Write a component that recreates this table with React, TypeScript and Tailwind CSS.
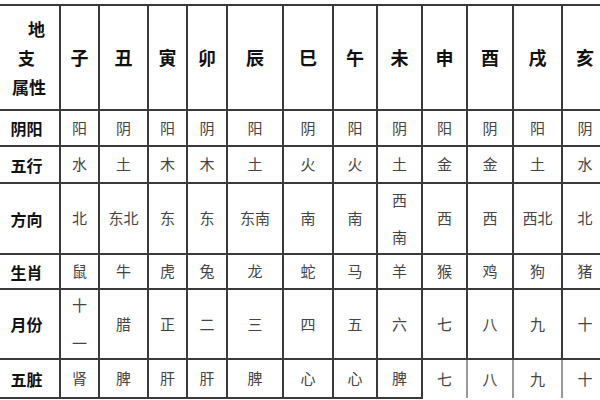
import React from 'react';

const font = { fontFamily: '"Noto Sans CJK SC", "Noto Sans", sans-serif' };

export default function App() {
  const widths = [60, 39, 49, 39, 40, 56, 50, 44, 45, 45, 46, 49, 46];
  const branches = ['子', '丑', '寅', '卯', '辰', '巳', '午', '未', '申', '酉', '戌', '亥'];

  const rows: { label: string; h: string; cells: React.ReactNode[] }[] = [
    { label: '阴阳', h: 'h-[36px]', cells: ['阳', '阴', '阳', '阴', '阳', '阴', '阳', '阴', '阳', '阴', '阳', '阴'] },
    { label: '五行', h: 'h-[37px]', cells: ['水', '土', '木', '木', '土', '火', '火', '土', '金', '金', '土', '水'] },
    {
      label: '方向',
      h: 'h-[71px]',
      cells: ['北', '东北', '东', '东', '东南', '南', '南',
        <div className="flex flex-col gap-[14px]"><span>西</span><span>南</span></div>,
        '西', '西', '西北', '北'],
    },
    { label: '生肖', h: 'h-[35px]', cells: ['鼠', '牛', '虎', '兔', '龙', '蛇', '马', '羊', '猴', '鸡', '狗', '猪'] },
    {
      label: '月份',
      h: 'h-[70px]',
      cells: [
        <div className="flex flex-col gap-[16px]"><span>十</span><span>一</span></div>,
        '腊', '正', '二', '三', '四', '五', '六', '七', '八', '九', '十',
      ],
    },
    { label: '五脏', h: 'h-[39px]', cells: ['肾', '脾', '肝', '肝', '脾', '心', '心', '脾', '七', '八', '九', '十'] },
  ];

  return (
    <div className="w-[600px] h-[400px] overflow-hidden bg-white pt-[4px]" style={font}>
      <table className="table-fixed border-collapse w-[608px]">
        <colgroup>
          {widths.map((w, i) => (
            <col key={i} style={{ width: w }} />
          ))}
        </colgroup>
        <tbody>
          <tr className="h-[105px]">
            <td className="border-y-2 border-r-2 border-[#3a3a3a] text-[17px] font-bold text-[#111] leading-[29px]">
              <div className="flex flex-col pl-[12px]">
                <span className="pl-[16px]">地</span>
                <span className="pl-[6px]">支</span>
                <span>属性</span>
              </div>
            </td>
            {branches.map((b) => (
              <td key={b} className="border-2 border-[#3a3a3a] text-center text-[18px] font-bold text-[#111]">
                {b}
              </td>
            ))}
          </tr>
          {rows.map((r) => (
            <tr key={r.label} className={r.h}>
              <td className="border-y-2 border-r-2 border-[#3a3a3a] pr-[6px] text-center text-[16px] font-bold text-[#111]">
                {r.label}
              </td>
              {r.cells.map((c, i) => (
                <td
                  key={i}
                  className={
                    'border-2 border-[#3a3a3a] text-center align-middle text-[15px] text-[#444] ' +
                    (r.label === '五脏' && i >= 8 ? 'border-b-0 border-[#9a9a9a]' : '')
                  }
                >
                  <div className="flex justify-center">{c}</div>
                </td>
              ))}
            </tr>
          ))}
        </tbody>
      </table>
    </div>
  );
}
